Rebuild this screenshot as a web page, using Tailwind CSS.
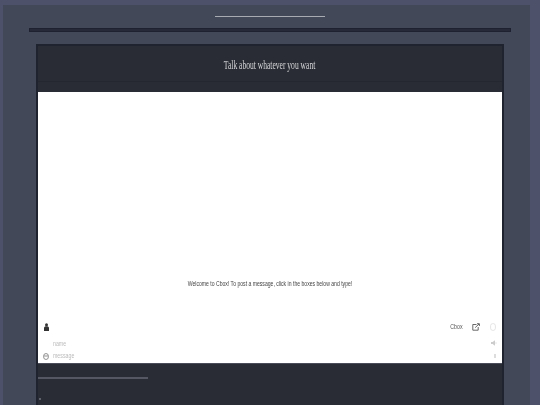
<!DOCTYPE html>
<html lang="en">
<head>
  <meta charset="UTF-8" />
  <title>Cbox</title>
  <script src="https://cdn.jsdelivr.net/npm/@tailwindcss/browser@4"></script>
</head>
<body class="w-[540px] h-[405px] overflow-hidden bg-[#4d5169] font-['Liberation_Sans',sans-serif] antialiased">

  <!-- page -->
  <div class="ml-[3px] mr-[10px] mt-[5px] h-[400px] bg-[#434859] overflow-hidden">

    <!-- title rule -->
    <div class="mt-[10.5px] ml-[212px] w-[110px] h-px bg-[#a9abb3]"></div>

    <!-- nav bar -->
    <div class="mt-[11.5px] ml-[26px] w-[482px] h-1 bg-[#262a38] border border-[#1e2130]"></div>

    <!-- chat frame -->
    <div class="mt-3 ml-[33px] w-[468px] h-[361px] bg-[#292c34] border-x-2 border-t-2 border-[#1f2330] flex flex-col">
      <header class="h-[46px] shrink-0">
        <div class="h-[36px] pt-[2px] border-b border-[#24272f] flex items-center justify-center">
          <h1 class="font-['Liberation_Serif',serif] text-[12px] leading-none text-[#d5d6da] scale-x-[0.63] whitespace-nowrap blur-[0.3px]">Talk about whatever you want</h1>
        </div>
      </header>

      <main class="h-[271px] shrink-0 bg-white flex flex-col">
        <div class="h-[226px] shrink-0 flex items-end justify-center pb-[31px]">
          <p class="text-[7.5px] leading-none text-[#444] scale-x-[0.68] whitespace-nowrap blur-[0.3px]">Welcome to Cbox! To post a message, click in the boxes below and type!</p>
        </div>

        <!-- toolbar -->
        <div class="h-[18px] flex items-center pl-[6px] pr-[5px]">
          <svg class="w-[5px] h-[8px]" viewBox="0 0 5 8"><circle cx="2.5" cy="1.7" r="1.5" fill="#333"/><path d="M0 8V5C0 3.9 1 3.3 2.5 3.3S5 3.9 5 5V8Z" fill="#333"/></svg>
          <span class="ml-auto text-[7.5px] leading-none text-[#555] scale-x-[0.7] origin-right blur-[0.3px]">Cbox</span>
          <svg class="ml-[9px] mb-[1px] w-[8px] h-[8px]" viewBox="0 0 8 8" fill="none" stroke="#444" stroke-width=".8"><path d="M4.5 1.5H.8V7.2H6.2V4"/><path d="M3.2 4.6 7 1M5 .7H7.4V3"/></svg>
          <svg class="ml-[10px] mr-[1px] w-[6px] h-[8px]" viewBox="0 0 6 8" fill="none" stroke="#ddd" stroke-width=".8"><rect x=".6" y=".6" width="4.8" height="6.8" rx="2.2"/></svg>
        </div>

        <!-- name -->
        <div class="h-[13px] flex items-center pl-[15px] pr-[5px]">
          <span class="mt-[2px] text-[7.5px] leading-none text-[#bbb] scale-x-[0.7] origin-left blur-[0.3px]">name</span>
          <svg class="ml-auto w-[6px] h-[6px]" viewBox="0 0 6 6"><path d="M0 2H1.6L4 .3V5.7L1.6 4H0Z" fill="#ccc"/><path d="M5 2V4" stroke="#ddd" stroke-width=".7"/></svg>
        </div>

        <!-- message -->
        <div class="h-[14px] flex items-center pl-[5px] pr-[6px]">
          <svg class="w-[6px] h-[7px]" viewBox="0 0 6 7" fill="none" stroke="#777" stroke-width=".8"><ellipse cx="3" cy="3.5" rx="2.5" ry="3"/><path d="M1 3H5" /></svg>
          <span class="ml-[4px] text-[7.5px] leading-none text-[#bbb] scale-x-[0.7] origin-left blur-[0.3px]">message</span>
          <span class="ml-auto w-[2px] h-[4px] bg-[#ddd]"></span>
        </div>
      </main>

      <!-- bottom -->
      <div class="border-t border-[#4a4d59]">
        <div class="mt-[13px] w-[110px] h-[2px] bg-[#555863]"></div>
        <div class="mt-[19px] ml-px w-[2px] h-[2px] bg-[#5f626c]"></div>
      </div>
    </div>
  </div>
</body>
</html>
